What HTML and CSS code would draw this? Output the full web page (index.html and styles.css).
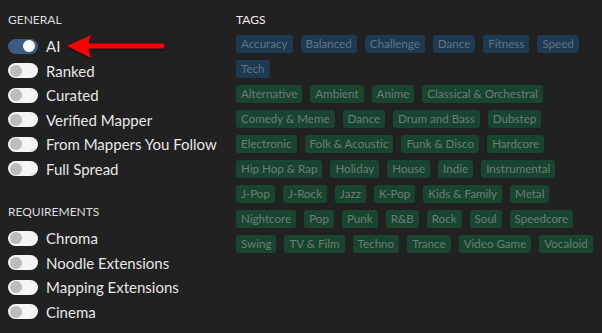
FILE: index.html
```html
<!DOCTYPE html>
<html lang="en">
<head>
    <meta charset="UTF-8">
    <title>Filters</title>
    <link rel="stylesheet" href="styles.css">
</head>
<body>
<div class="filters">
    <div class="options">
        <h4>General</h4>
        <ul class="checks">
            <li><span class="switch on"></span>AI</li>
            <li><span class="switch"></span>Ranked</li>
            <li><span class="switch"></span>Curated</li>
            <li><span class="switch"></span>Verified Mapper</li>
            <li><span class="switch"></span>From Mappers You Follow</li>
            <li><span class="switch"></span>Full Spread</li>
        </ul>
        <h4>Requirements</h4>
        <ul class="checks">
            <li><span class="switch"></span>Chroma</li>
            <li><span class="switch"></span>Noodle Extensions</li>
            <li><span class="switch"></span>Mapping Extensions</li>
            <li><span class="switch"></span>Cinema</li>
        </ul>
        <svg class="arrow" width="110" height="36" viewBox="0 0 110 36">
            <line x1="26" y1="18" x2="102" y2="18" stroke="#f00" stroke-width="5" stroke-linecap="round"/>
            <path d="M7 18 L31 7 Q26 18 31 30 Z" fill="#f00"/>
        </svg>
    </div>
    <div class="tags">
        <h4>Tags</h4>
        <div class="taglist style">
            <span>Accuracy</span><span>Balanced</span><span>Challenge</span><span>Dance</span><span>Fitness</span><span>Speed</span><span>Tech</span>
        </div>
        <div class="taglist genre">
            <span>Alternative</span><span>Ambient</span><span>Anime</span><span>Classical &amp; Orchestral</span><span>Comedy &amp; Meme</span><span>Dance</span><span>Drum and Bass</span><span>Dubstep</span><span>Electronic</span><span>Folk &amp; Acoustic</span><span>Funk &amp; Disco</span><span>Hardcore</span><span>Hip Hop &amp; Rap</span><span>Holiday</span><span>House</span><span>Indie</span><span>Instrumental</span><span>J-Pop</span><span>J-Rock</span><span>Jazz</span><span>K-Pop</span><span>Kids &amp; Family</span><span>Metal</span><span>Nightcore</span><span>Pop</span><span>Punk</span><span>R&amp;B</span><span>Rock</span><span>Soul</span><span>Speedcore</span><span>Swing</span><span>TV &amp; Film</span><span>Techno</span><span>Trance</span><span>Video Game</span><span>Vocaloid</span>
        </div>
    </div>
</div>
</body>
</html>
```

FILE: styles.css
```css
body {
    margin: 0;
    background: #212121;
    color: #e6e6e6;
    font-family: Lato, "Open Sans", sans-serif;
}
.filters {
    display: grid;
    grid-template-columns: 228px 1fr;
    padding: 12px 8px 0 8px;
}
.options {
    position: relative;
}
h4 {
    margin: 0 0 6px 0;
    font-size: 12px;
    font-weight: normal;
    line-height: 16px;
    text-transform: uppercase;
    color: #dcdcdc;
}
.checks {
    list-style: none;
    margin: 0 0 23px 0;
    padding: 0;
}
.checks li {
    display: flex;
    align-items: center;
    height: 24.5px;
    font-size: 15px;
}
.switch {
    position: relative;
    width: 30px;
    height: 15px;
    margin-right: 8px;
    border-radius: 8px;
    background: #f4f4f4;
    flex: none;
}
.switch::after {
    content: "";
    position: absolute;
    left: 2px;
    top: 1.5px;
    width: 12px;
    height: 12px;
    border-radius: 50%;
    background: #bcbcbc;
}
.switch.on {
    background: #3b5b82;
}
.switch.on::after {
    left: auto;
    right: 3px;
    background: #fff;
}
.arrow {
    position: absolute;
    left: 52px;
    top: 16px;
    filter: drop-shadow(0 1px 1px rgba(0, 0, 0, 0.5));
}
.tags h4 {
    margin-bottom: 7px;
    color: #eee;
}
.taglist {
    display: flex;
    flex-wrap: wrap;
    gap: 7.5px 8px;
    margin-bottom: 7.5px;
}
.taglist span {
    height: 17.5px;
    line-height: 17.5px;
    padding: 0 5px;
    border-radius: 3px;
    font-size: 11.6px;
}
.style span {
    background: #1d3a52;
    color: #63737f;
}
.genre span {
    background: #18452f;
    color: #6c7d74;
}
```
